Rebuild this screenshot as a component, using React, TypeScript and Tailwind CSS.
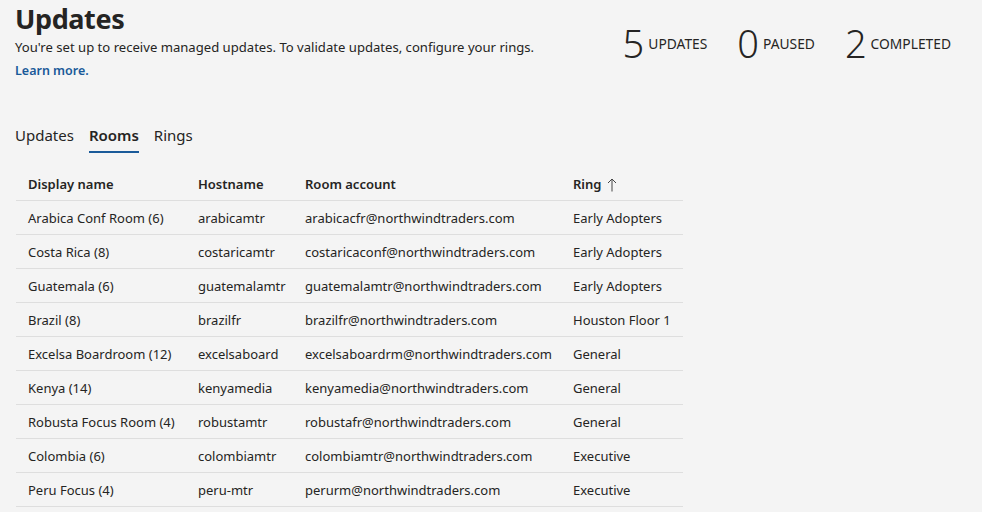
import React from "react";

const rows = [
  ["Arabica Conf Room (6)", "arabicamtr", "arabicacfr@northwindtraders.com", "Early Adopters"],
  ["Costa Rica (8)", "costaricamtr", "costaricaconf@northwindtraders.com", "Early Adopters"],
  ["Guatemala (6)", "guatemalamtr", "guatemalamtr@northwindtraders.com", "Early Adopters"],
  ["Brazil (8)", "brazilfr", "brazilfr@northwindtraders.com", "Houston Floor 1"],
  ["Excelsa Boardroom (12)", "excelsaboard", "excelsaboardrm@northwindtraders.com", "General"],
  ["Kenya (14)", "kenyamedia", "kenyamedia@northwindtraders.com", "General"],
  ["Robusta Focus Room (4)", "robustamtr", "robustafr@northwindtraders.com", "General"],
  ["Colombia (6)", "colombiamtr", "colombiamtr@northwindtraders.com", "Executive"],
  ["Peru Focus (4)", "peru-mtr", "perurm@northwindtraders.com", "Executive"],
];

const cols = "grid grid-cols-[170px_107px_268px_122px]";

function Stat({ n, label }: { n: string; label: string }) {
  return (
    <div className="flex items-center gap-[4px]">
      <span className="text-[38px] font-light leading-none text-[#252423]">{n}</span>
      <span className="text-[13.8px] text-[#252423] pt-[2px]">{label}</span>
    </div>
  );
}

export default function App() {
  return (
    <div
      className="w-[982px] h-[512px] overflow-hidden bg-[#f4f4f4] text-[#252423]"
      style={{ fontFamily: '"Noto Sans", "Open Sans", sans-serif' }}
    >
      <div className="flex justify-between pl-[15px] pr-[31px]">
        <div className="pt-[2px]">
          <h1 className="text-[27px] font-bold leading-[34px] tracking-[-0.4px]">Updates</h1>
          <p className="text-[13.1px] leading-[18px] mt-[2px]">
            You're set up to receive managed updates. To validate updates, configure your rings.
          </p>
          <a className="block text-[12.5px] font-semibold text-[#1a5a99] mt-[6px] leading-[18px]">Learn more.</a>
        </div>
        <div className="flex gap-[30px] pt-[6px]">
          <Stat n="5" label="UPDATES" />
          <Stat n="0" label="PAUSED" />
          <Stat n="2" label="COMPLETED" />
        </div>
      </div>

      <div className="flex gap-[15px] pl-[15px] mt-[44px] text-[15px]">
        <div className="pb-[4px] border-b-2 border-transparent">Updates</div>
        <div className="pb-[4px] border-b-2 border-[#1a5a99] font-semibold">Rooms</div>
        <div className="pb-[4px] border-b-2 border-transparent">Rings</div>
      </div>

      <div className="ml-[16px] mt-[16px] w-[667px] text-[13px]">
        <div className={`${cols} h-[32px] items-center border-b border-[#dedede] font-semibold pt-[1px]`}>
          <div className="pl-3">Display name</div>
          <div className="pl-3">Hostname</div>
          <div className="pl-3">Room account</div>
          <div className="pl-3 flex items-center gap-[6px]">
            Ring
            <svg width="10" height="14" viewBox="0 0 10 14" fill="none" stroke="#444" strokeWidth="1">
              <path d="M5 13.5V1M1 5l4-4 4 4" />
            </svg>
          </div>
        </div>
        {rows.map((r, i) => (
          <div key={i} className={`${cols} h-[34px] items-center border-b border-[#dedede] pt-[3px]`}>
            {r.map((c, j) => (
              <div key={j} className="pl-3 whitespace-nowrap">
                {c}
              </div>
            ))}
          </div>
        ))}
      </div>
    </div>
  );
}
